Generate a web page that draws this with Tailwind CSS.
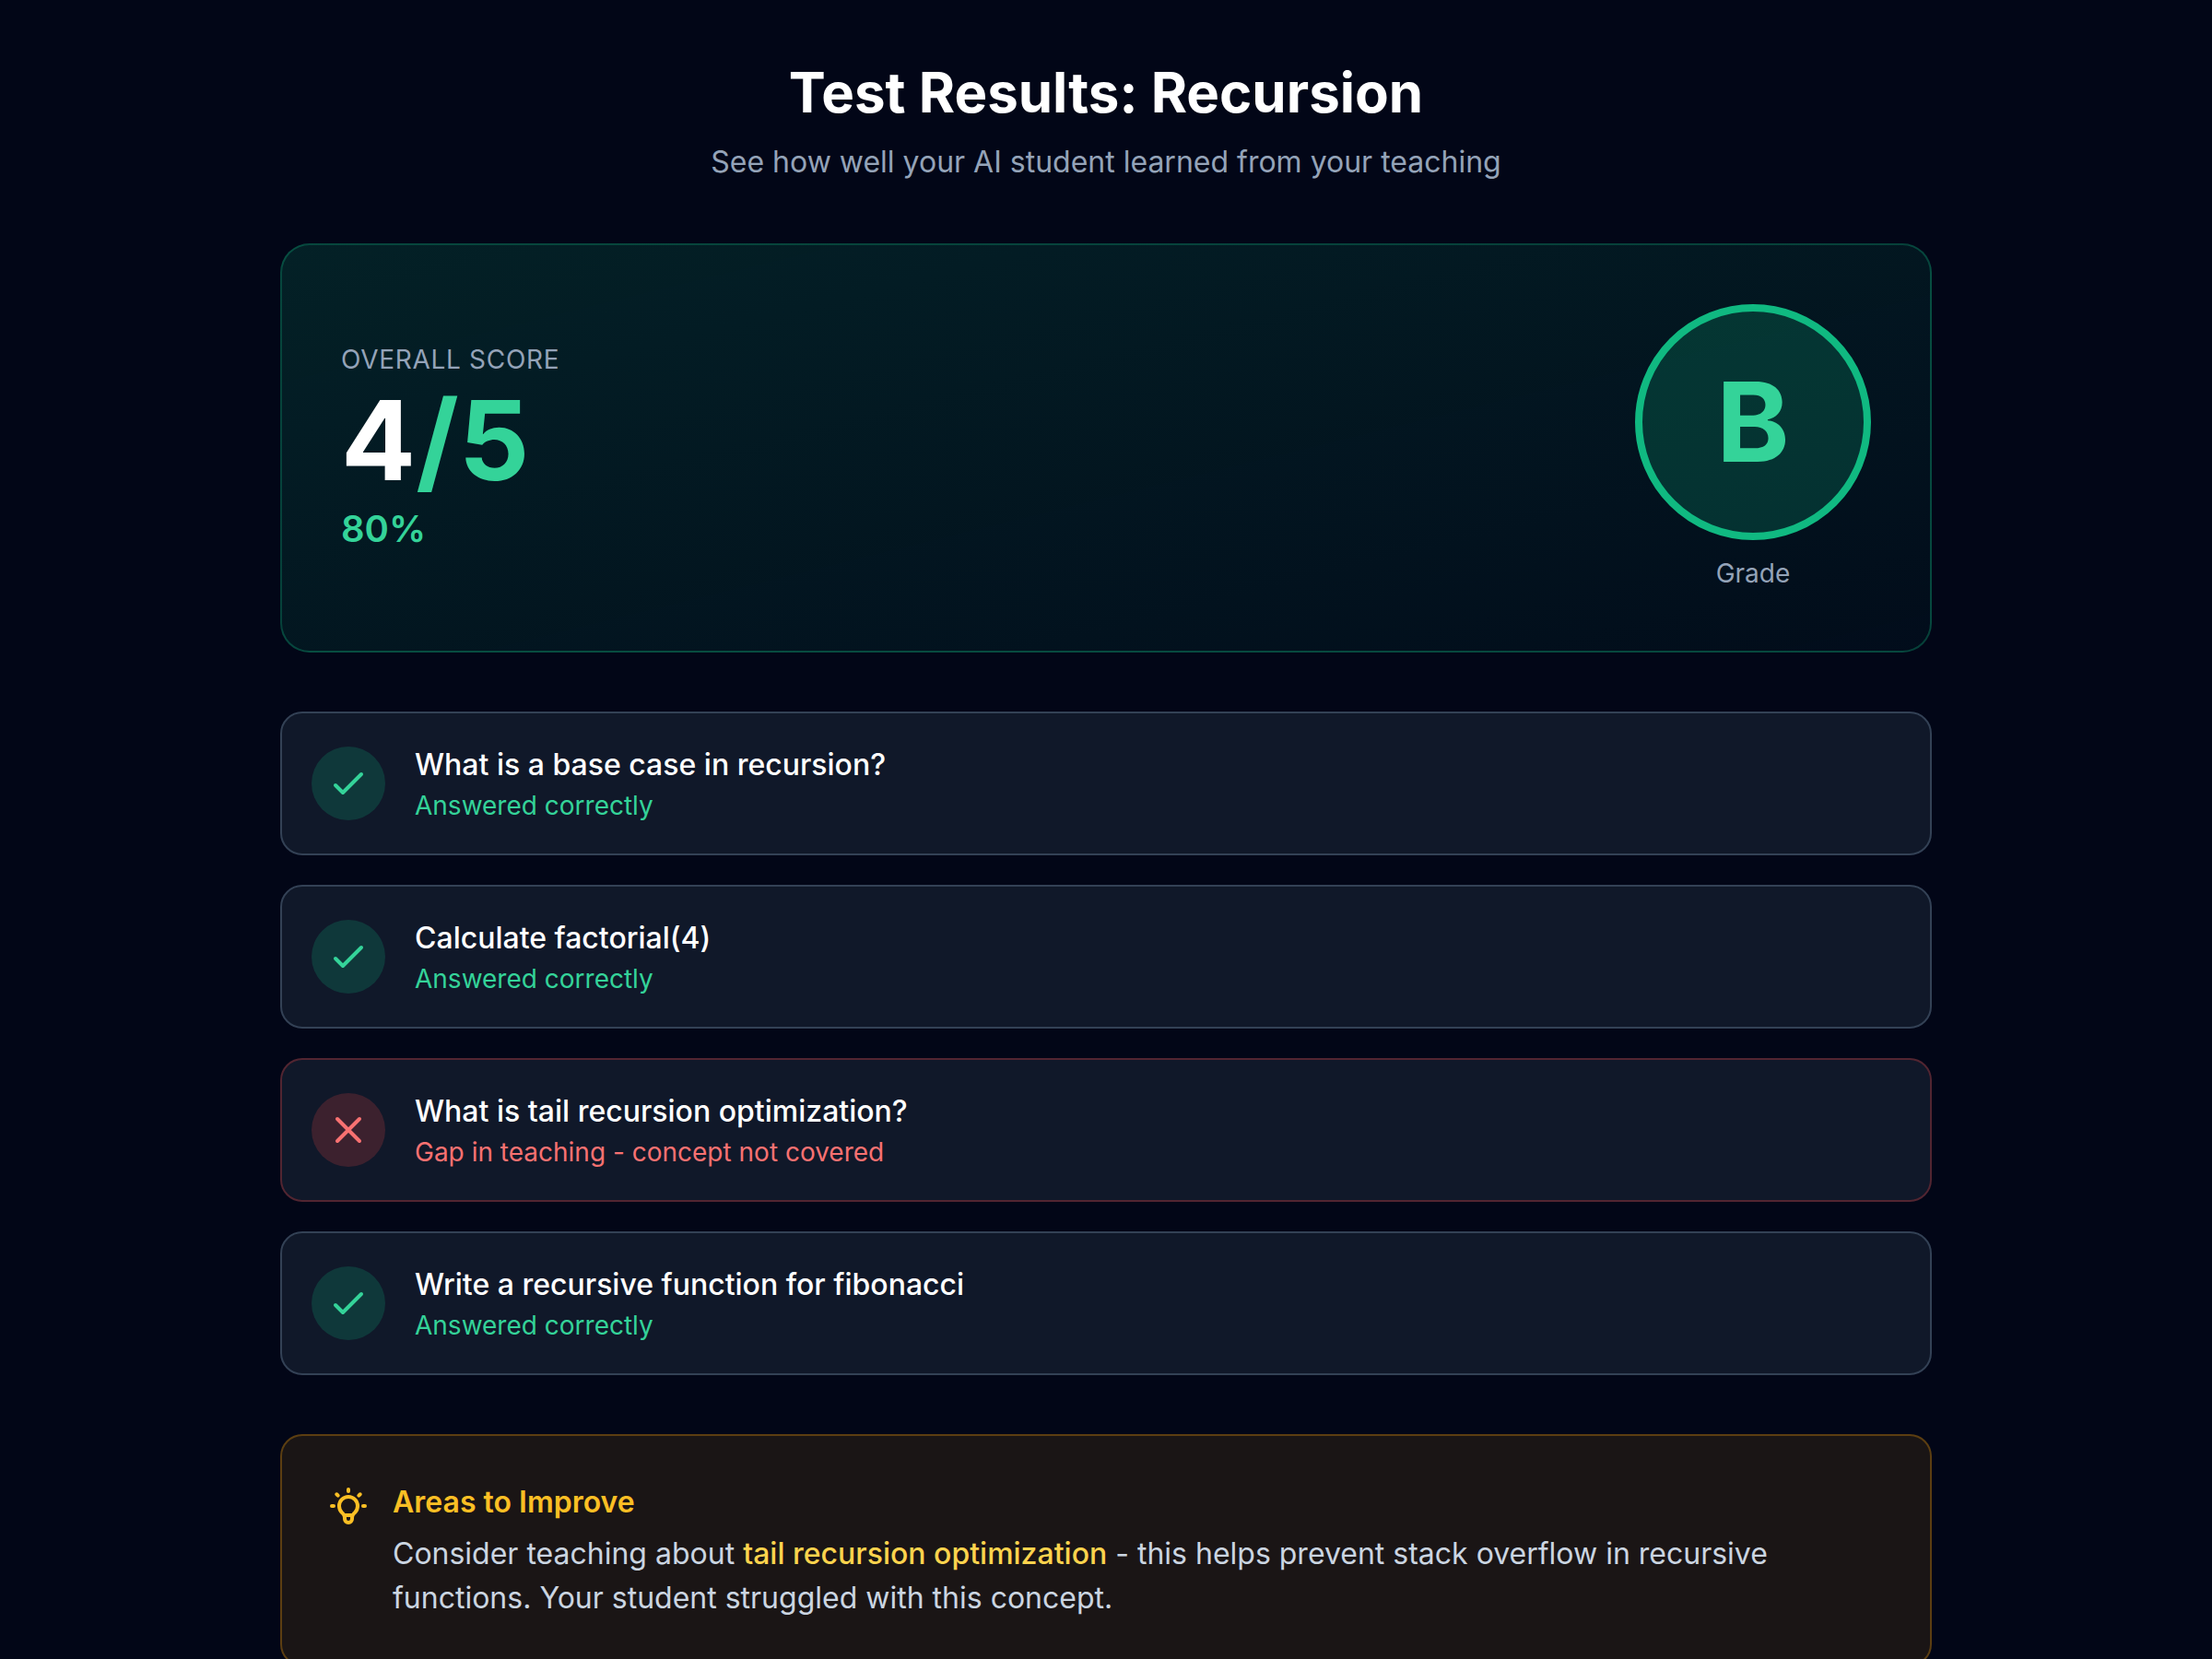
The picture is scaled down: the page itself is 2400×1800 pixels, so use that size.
<!DOCTYPE html>
<html lang="en">
<head>
<meta charset="UTF-8">
<meta name="viewport" content="width=device-width, initial-scale=1.0">
<title>Test Results: Recursion</title>
<script src="https://cdn.jsdelivr.net/npm/@tailwindcss/browser@4"></script>
</head>
<body class="min-h-screen bg-[#020617] font-['Inter',sans-serif] text-white antialiased">
  <svg class="hidden" aria-hidden="true">
    <symbol id="check" viewBox="0 0 24 24"><path d="M5 13l4 4L19 7" fill="none" stroke="currentColor" stroke-width="2" stroke-linecap="round" stroke-linejoin="round"/></symbol>
    <symbol id="cross" viewBox="0 0 24 24"><path d="M6 18L18 6M6 6l12 12" fill="none" stroke="currentColor" stroke-width="2" stroke-linecap="round" stroke-linejoin="round"/></symbol>
  </svg>

  <main class="mx-auto flex w-full max-w-[1792px] flex-col gap-16 py-16">
    <header class="text-center">
      <h1 class="mb-4 text-[60px] leading-[72px] font-bold">Test Results: Recursion</h1>
      <p class="text-[32px] leading-[48px] text-[#94a3b8]">See how well your AI student learned from your teaching</p>
    </header>

    <section class="flex items-center justify-between rounded-[32px] border-2 border-[#10b981]/30 bg-linear-to-br/srgb from-[#10b981]/15 to-[#10b981]/4 p-16">
      <div>
        <p class="mb-2 text-[28px] leading-10 tracking-wide text-[#94a3b8] uppercase">Overall Score</p>
        <p class="text-[120px] leading-none font-bold">4<span class="text-[#34d399]">/5</span></p>
        <p class="mt-2 text-[40px] leading-[56px] font-semibold text-[#34d399]">80%</p>
      </div>
      <div class="text-center">
        <div class="flex size-64 items-center justify-center rounded-full border-8 border-[#10b981] bg-[#10b981]/20">
          <span class="text-[120px] leading-none font-bold text-[#34d399]">B</span>
        </div>
        <p class="mt-4 text-[28px] leading-10 text-[#94a3b8]">Grade</p>
      </div>
    </section>

    <ul class="flex flex-col gap-8">
      <li class="flex items-center gap-8 rounded-[24px] border-2 border-[#334155] bg-[#1e293b]/50 p-8">
        <span class="flex size-20 shrink-0 items-center justify-center rounded-full bg-[#10b981]/20 text-[#34d399]"><svg class="size-12" aria-hidden="true"><use href="#check"/></svg></span>
        <div>
          <h2 class="text-[32px] leading-[48px] font-medium">What is a base case in recursion?</h2>
          <p class="text-[28px] leading-10 text-[#34d399]">Answered correctly</p>
        </div>
      </li>
      <li class="flex items-center gap-8 rounded-[24px] border-2 border-[#334155] bg-[#1e293b]/50 p-8">
        <span class="flex size-20 shrink-0 items-center justify-center rounded-full bg-[#10b981]/20 text-[#34d399]"><svg class="size-12" aria-hidden="true"><use href="#check"/></svg></span>
        <div>
          <h2 class="text-[32px] leading-[48px] font-medium">Calculate factorial(4)</h2>
          <p class="text-[28px] leading-10 text-[#34d399]">Answered correctly</p>
        </div>
      </li>
      <li class="flex items-center gap-8 rounded-[24px] border-2 border-[#ef4444]/30 bg-[#1e293b]/50 p-8">
        <span class="flex size-20 shrink-0 items-center justify-center rounded-full bg-[#ef4444]/20 text-[#f87171]"><svg class="size-12" aria-hidden="true"><use href="#cross"/></svg></span>
        <div>
          <h2 class="text-[32px] leading-[48px] font-medium">What is tail recursion optimization?</h2>
          <p class="text-[28px] leading-10 text-[#f87171]">Gap in teaching - concept not covered</p>
        </div>
      </li>
      <li class="flex items-center gap-8 rounded-[24px] border-2 border-[#334155] bg-[#1e293b]/50 p-8">
        <span class="flex size-20 shrink-0 items-center justify-center rounded-full bg-[#10b981]/20 text-[#34d399]"><svg class="size-12" aria-hidden="true"><use href="#check"/></svg></span>
        <div>
          <h2 class="text-[32px] leading-[48px] font-medium">Write a recursive function for fibonacci</h2>
          <p class="text-[28px] leading-10 text-[#34d399]">Answered correctly</p>
        </div>
      </li>
    </ul>

    <section class="flex items-start gap-6 rounded-[24px] border-2 border-[#f59e0b]/30 bg-[#f59e0b]/10 p-12">
      <svg class="mt-1 size-12 shrink-0 text-[#fbbf24]" viewBox="0 0 24 24" fill="none" stroke="currentColor" stroke-width="2" stroke-linecap="round" stroke-linejoin="round" aria-hidden="true"><path d="M9.663 17h4.673M12 3v1m6.364 1.636l-.707.707M21 12h-1M4 12H3m3.343-5.657l-.707-.707m2.828 9.9a5 5 0 117.072 0l-.548.547A3.374 3.374 0 0014 18.469V19a2 2 0 11-4 0v-.531c0-.895-.356-1.754-.988-2.386l-.548-.547z"/></svg>
      <div>
        <h2 class="mb-2 text-[32px] leading-[48px] font-semibold text-[#fbbf24]">Areas to Improve</h2>
        <p class="text-[32px] leading-[48px] text-[#cbd5e1]">Consider teaching about <span class="font-medium text-[#fcd34d]">tail recursion optimization</span> - this helps prevent stack overflow in recursive functions. Your student struggled with this concept.</p>
      </div>
    </section>
  </main>
</body>
</html>
